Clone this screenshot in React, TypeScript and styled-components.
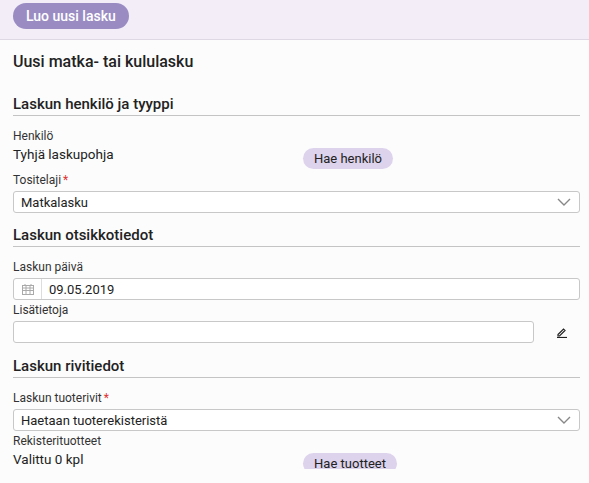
import React from "react";
import styled, { createGlobalStyle } from "styled-components";

const G = createGlobalStyle`
  body { margin:0; background:#fcfcfc; font-family: "Fira Sans", Roboto, "Noto Sans", sans-serif; color:#222; }
`;
const Header = styled.div`
  height:39px; background:#f2edf7; border-bottom:1px solid #ddd8e3;
  display:flex; align-items:center; padding-left:13px;
`;
const PrimaryBtn = styled.button`
  height:26px; padding:0 13px; border:none; border-radius:13px; background:#9a8cc3;
  color:#fff; font:500 14px Roboto, sans-serif; margin-top:-8px;
`;
const Main = styled.div`padding:0 9px 0 13px;`;
const Title = styled.h1`font:500 16px Roboto, sans-serif; margin:11px 0 0; height:22px; line-height:22px;`;
const Section = styled.h2<{ $top: number }>`
  font:500 15px Roboto, sans-serif; margin:${p => p.$top}px 0 0; padding-bottom:2px;
  border-bottom:1px solid #c4c4c4; line-height:18px;
`;
const Label = styled.div<{ $top?: number }>`font:12px Roboto, sans-serif; color:#333; margin-top:${p => p.$top ?? 0}px; line-height:16px;`;
const Star = styled.span`color:#d33; margin-left:2px;`;
const Row = styled.div<{ $w: number }>`display:flex; align-items:flex-start; justify-content:space-between; width:${p => p.$w}px; height:20px;`;
const Value = styled.div`font:13.5px Roboto, sans-serif; line-height:20px;`;
const SoftBtn = styled.button<{ $w: number }>`
  width:${p => p.$w}px; height:21px; border:none; border-radius:11px; background:#ddd3ec;
  font:13px Roboto, sans-serif; color:#222; margin-top:4px; flex-shrink:0;
`;
const Box = styled.div<{ $w?: string }>`
  width:${p => p.$w ?? "100%"}; flex-shrink:0; box-sizing:border-box; height:22px; border:1px solid #c8c8c8; border-radius:3px;
  background:#fff; display:flex; align-items:center; font:13px Roboto, sans-serif; margin-top:3px;
`;
const Txt = styled.span`flex:1; padding-left:7px;`;
const Cal = styled.div`width:27px; height:100%; border-right:1px solid #ddd; display:flex; align-items:center; justify-content:center;`;
const EditRow = styled.div`display:flex; align-items:center;`;
const Pen = styled.div`flex:1; display:flex; justify-content:center; padding:3px 0 0 10px;`;

const Chevron = () => (
  <svg width="14" height="8" viewBox="0 0 14 8" style={{ marginRight: 8 }}>
    <path d="M1 1l6 6 6-6" fill="none" stroke="#888" strokeWidth="1.4" />
  </svg>
);

export default function App() {
  return (
    <>
      <G />
      <Header><PrimaryBtn>Luo uusi lasku</PrimaryBtn></Header>
      <Main>
        <Title>Uusi matka- tai kululasku</Title>
        <Section $top={22}>Laskun henkilö ja tyyppi</Section>
        <Label $top={12}>Henkilö</Label>
        <Row $w={380}><Value>Tyhjä laskupohja</Value><SoftBtn $w={90}>Hae henkilö</SoftBtn></Row>
        <Label $top={8}>Tositelaji<Star>*</Star></Label>
        <Box><Txt>Matkalasku</Txt><Chevron /></Box>
        <Section $top={13}>Laskun otsikkotiedot</Section>
        <Label $top={12}>Laskun päivä</Label>
        <Box>
          <Cal>
            <svg width="12" height="11" viewBox="0 0 12 11">
              <rect x="0.5" y="1.5" width="11" height="9" fill="none" stroke="#aaa" />
              <path d="M0 4h12M0 6.5h12M4 2v9M8 2v9M3 0v2M9 0v2" stroke="#aaa" />
            </svg>
          </Cal>
          <Txt>09.05.2019</Txt>
        </Box>
        <Label $top={2}>Lisätietoja</Label>
        <EditRow>
          <Box $w="521px" />
          <Pen>
            <svg width="12" height="12" viewBox="0 0 12 12">
              <path d="M2 8.5l5.5-5.5 1.5 1.5-5.5 5.5H2z" fill="none" stroke="#222" strokeWidth="1.2" />
              <path d="M1 11.5h10" stroke="#222" strokeWidth="1.2" />
            </svg>
          </Pen>
        </EditRow>
        <Section $top={14}>Laskun rivitiedot</Section>
        <Label $top={12}>Laskun tuoterivit<Star>*</Star></Label>
        <Box><Txt>Haetaan tuoterekisteristä</Txt><Chevron /></Box>
        <Label $top={2}>Rekisterituotteet</Label>
        <Row $w={384}><Value>Valittu 0 kpl</Value><SoftBtn $w={94}>Hae tuotteet</SoftBtn></Row>
      </Main>
    </>
  );
}
